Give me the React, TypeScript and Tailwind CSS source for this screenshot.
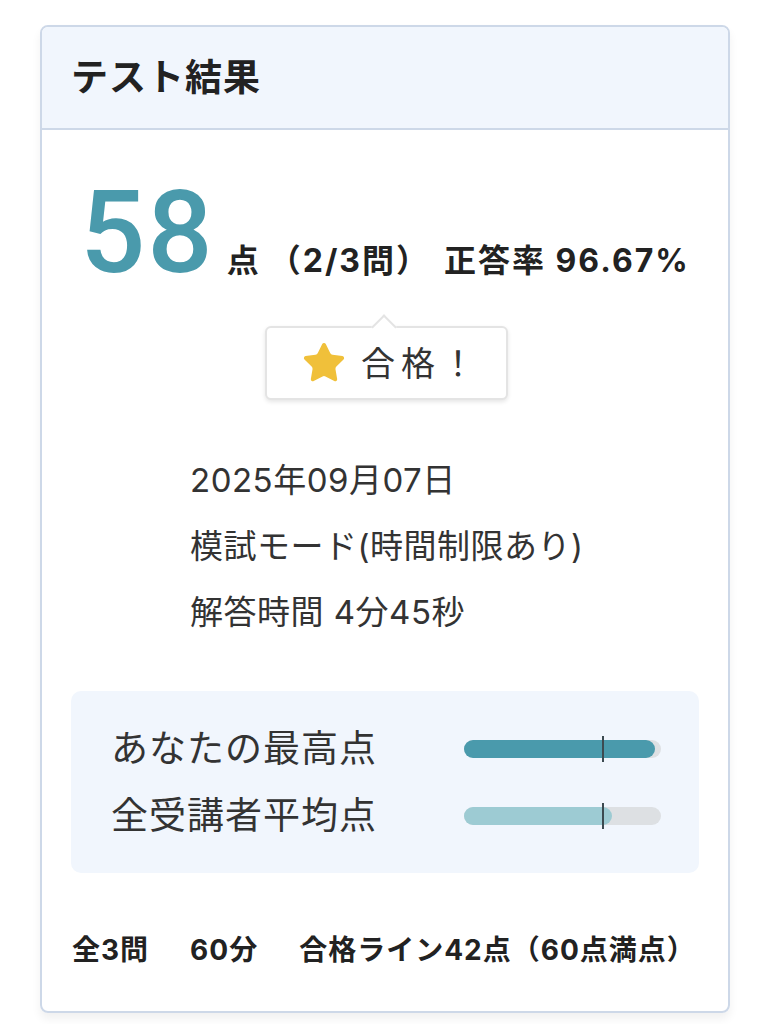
import { Star } from 'lucide-react';

const font = { fontFamily: 'Inter, "Noto Sans CJK JP", sans-serif' };

function ScoreBar({
  label,
  value,
  fill,
}: {
  label: string;
  value: number;
  fill: string;
}) {
  return (
    <div className="flex h-[47px] items-center justify-between">
      <span className="text-[37px] leading-[47px] tracking-[1px] text-[#333]">{label}</span>
      <div className="relative mr-[38px] h-[18px] w-[197px] rounded-full bg-[#dde0e3]">
        <div className={`h-full rounded-full ${fill}`} style={{ width: `${value}%` }} />
        <div className="absolute top-[-4px] left-[138px] h-[26px] w-[2px] bg-[#3c4a50]" />
      </div>
    </div>
  );
}

export default function App() {
  return (
    <div className="min-h-[1024px] bg-white px-[40px] pt-[25px]" style={font}>
      <div className="w-[690px] overflow-hidden rounded-[8px] border-2 border-[#cdd8e8] shadow-[0_6px_10px_rgba(0,0,0,0.06)]">
        <div className="flex h-[103px] items-center border-b-2 border-[#cdd8e8] bg-[#f1f6fd] pl-[29px]">
          <h1 className="text-[37px] font-bold tracking-[1px] text-[#222]">テスト結果</h1>
        </div>

        <div className="px-[29px] pt-[48px] pb-[40px]">
          <div className="flex items-baseline pl-[9px] text-[#222]">
            <span
              className="text-[115px] leading-[110px] font-medium tracking-[2px] text-[#4a9aac]"
              style={{ fontFamily: 'Roboto, "Liberation Sans", sans-serif' }}
            >
              58
            </span>
            <span className="ml-[12px] text-[32px] font-bold">点</span>
            <span className="ml-[10px] text-[32px] font-bold tracking-[2px]">（2/3問）</span>
            <span className="ml-[14px] text-[32px] font-bold tracking-[2px]">正答率 96.67%</span>
          </div>

          <div className="mt-[38px] flex pl-[194px]">
            <div className="relative flex h-[74px] w-[243px] items-center rounded-[6px] border-2 border-[#e4e4e4] bg-white pl-[34px] shadow-[0_2px_4px_rgba(0,0,0,0.1)]">
              <div className="absolute top-[-10px] left-[108px] h-[18px] w-[18px] rotate-45 border-t-2 border-l-2 border-[#e4e4e4] bg-white" />
              <Star className="h-[46px] w-[46px] fill-[#f0c03a] text-[#f0c03a]" strokeWidth={1} />
              <span className="ml-[14px] text-[34px] tracking-[6px] text-[#333]">合格！</span>
            </div>
          </div>

          <div className="mt-[58px] flex flex-col gap-[22px] pl-[119px] text-[33px] leading-[44px] tracking-[0.5px] text-[#333]">
            <p>2025年09月07日</p>
            <p>模試モード(時間制限あり)</p>
            <p>解答時間 4分45秒</p>
          </div>

          <div className="mt-[57px] flex flex-col gap-[20px] rounded-[10px] bg-[#f1f6fd] py-[34px] pl-[40px]">
            <ScoreBar label="あなたの最高点" value={97} fill="bg-[#4a9aac]" />
            <ScoreBar label="全受講者平均点" value={75} fill="bg-[#9dcbd3]" />
          </div>

          <div className="mt-[56px] flex gap-[41px] pl-[1px] text-[28px] font-bold tracking-[1px] text-[#222]">
            <span>全3問</span>
            <span>60分</span>
            <span>合格ライン42点（60点満点）</span>
          </div>
        </div>
      </div>
    </div>
  );
}
